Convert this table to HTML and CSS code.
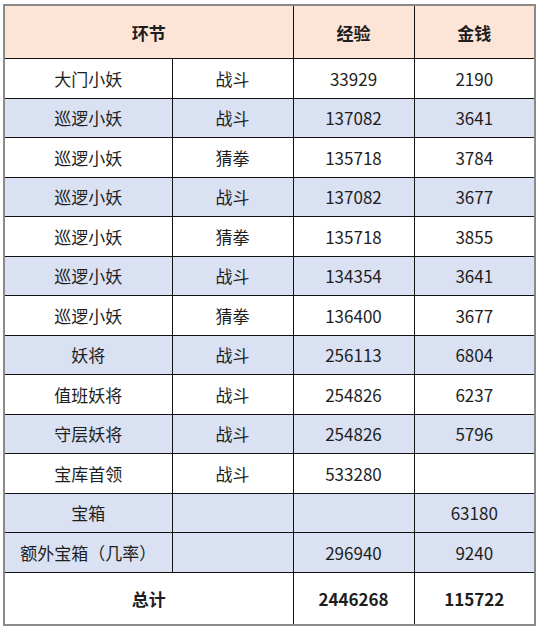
FILE: index.html
```html
<!DOCTYPE html>
<html lang="zh">
<head>
<meta charset="utf-8">
<link rel="stylesheet" href="styles.css">
</head>
<body>
<table class="sheet">
  <colgroup>
    <col class="c1"><col class="c2"><col class="c3"><col class="c4">
  </colgroup>
  <tr class="head">
    <th colspan="2">环节</th><th>经验</th><th>金钱</th>
  </tr>
  <tr class="row"><td>大门小妖</td><td>战斗</td><td>33929</td><td>2190</td></tr>
  <tr class="row blue"><td>巡逻小妖</td><td>战斗</td><td>137082</td><td>3641</td></tr>
  <tr class="row"><td>巡逻小妖</td><td>猜拳</td><td>135718</td><td>3784</td></tr>
  <tr class="row blue"><td>巡逻小妖</td><td>战斗</td><td>137082</td><td>3677</td></tr>
  <tr class="row"><td>巡逻小妖</td><td>猜拳</td><td>135718</td><td>3855</td></tr>
  <tr class="row blue"><td>巡逻小妖</td><td>战斗</td><td>134354</td><td>3641</td></tr>
  <tr class="row"><td>巡逻小妖</td><td>猜拳</td><td>136400</td><td>3677</td></tr>
  <tr class="row blue"><td>妖将</td><td>战斗</td><td>256113</td><td>6804</td></tr>
  <tr class="row"><td>值班妖将</td><td>战斗</td><td>254826</td><td>6237</td></tr>
  <tr class="row blue"><td>守层妖将</td><td>战斗</td><td>254826</td><td>5796</td></tr>
  <tr class="row"><td>宝库首领</td><td>战斗</td><td>533280</td><td></td></tr>
  <tr class="row blue"><td>宝箱</td><td></td><td></td><td>63180</td></tr>
  <tr class="row blue"><td>额外宝箱（几率）</td><td></td><td>296940</td><td>9240</td></tr>
  <tr class="total">
    <th colspan="2">总计</th><th>2446268</th><th>115722</th>
  </tr>
</table>
</body>
</html>
```
FILE: styles.css
```css
html, body {
  margin: 0;
  padding: 0;
  background: #ffffff;
}
body {
  padding: 4px 0 0 3px;
  font-family: "Noto Sans CJK SC", "Noto Sans", sans-serif;
  color: #1e1e1e;
}
.sheet {
  border-collapse: collapse;
  table-layout: fixed;
  width: 531px;
  border: 2px solid #8a8a8a;
  font-size: 17px;
}
.c1 { width: 168px; }
.c2 { width: 121px; }
.c3 { width: 121px; }
.c4 { width: 121px; }
.sheet td, .sheet th {
  border: 1px solid #111;
  text-align: center;
  vertical-align: middle;
  padding: 0;
  line-height: 1;
}
.head th {
  background: #fce4d6;
  font-weight: 700;
  height: 52px;
}
.row td {
  height: 38.5px;
}
.blue td {
  background: #d9e1f2;
}
.total th {
  font-weight: 700;
  height: 51px;
  background: #ffffff;
}
.sheet .head th, .sheet .total th {
  border-left-color: #333;
}
```
